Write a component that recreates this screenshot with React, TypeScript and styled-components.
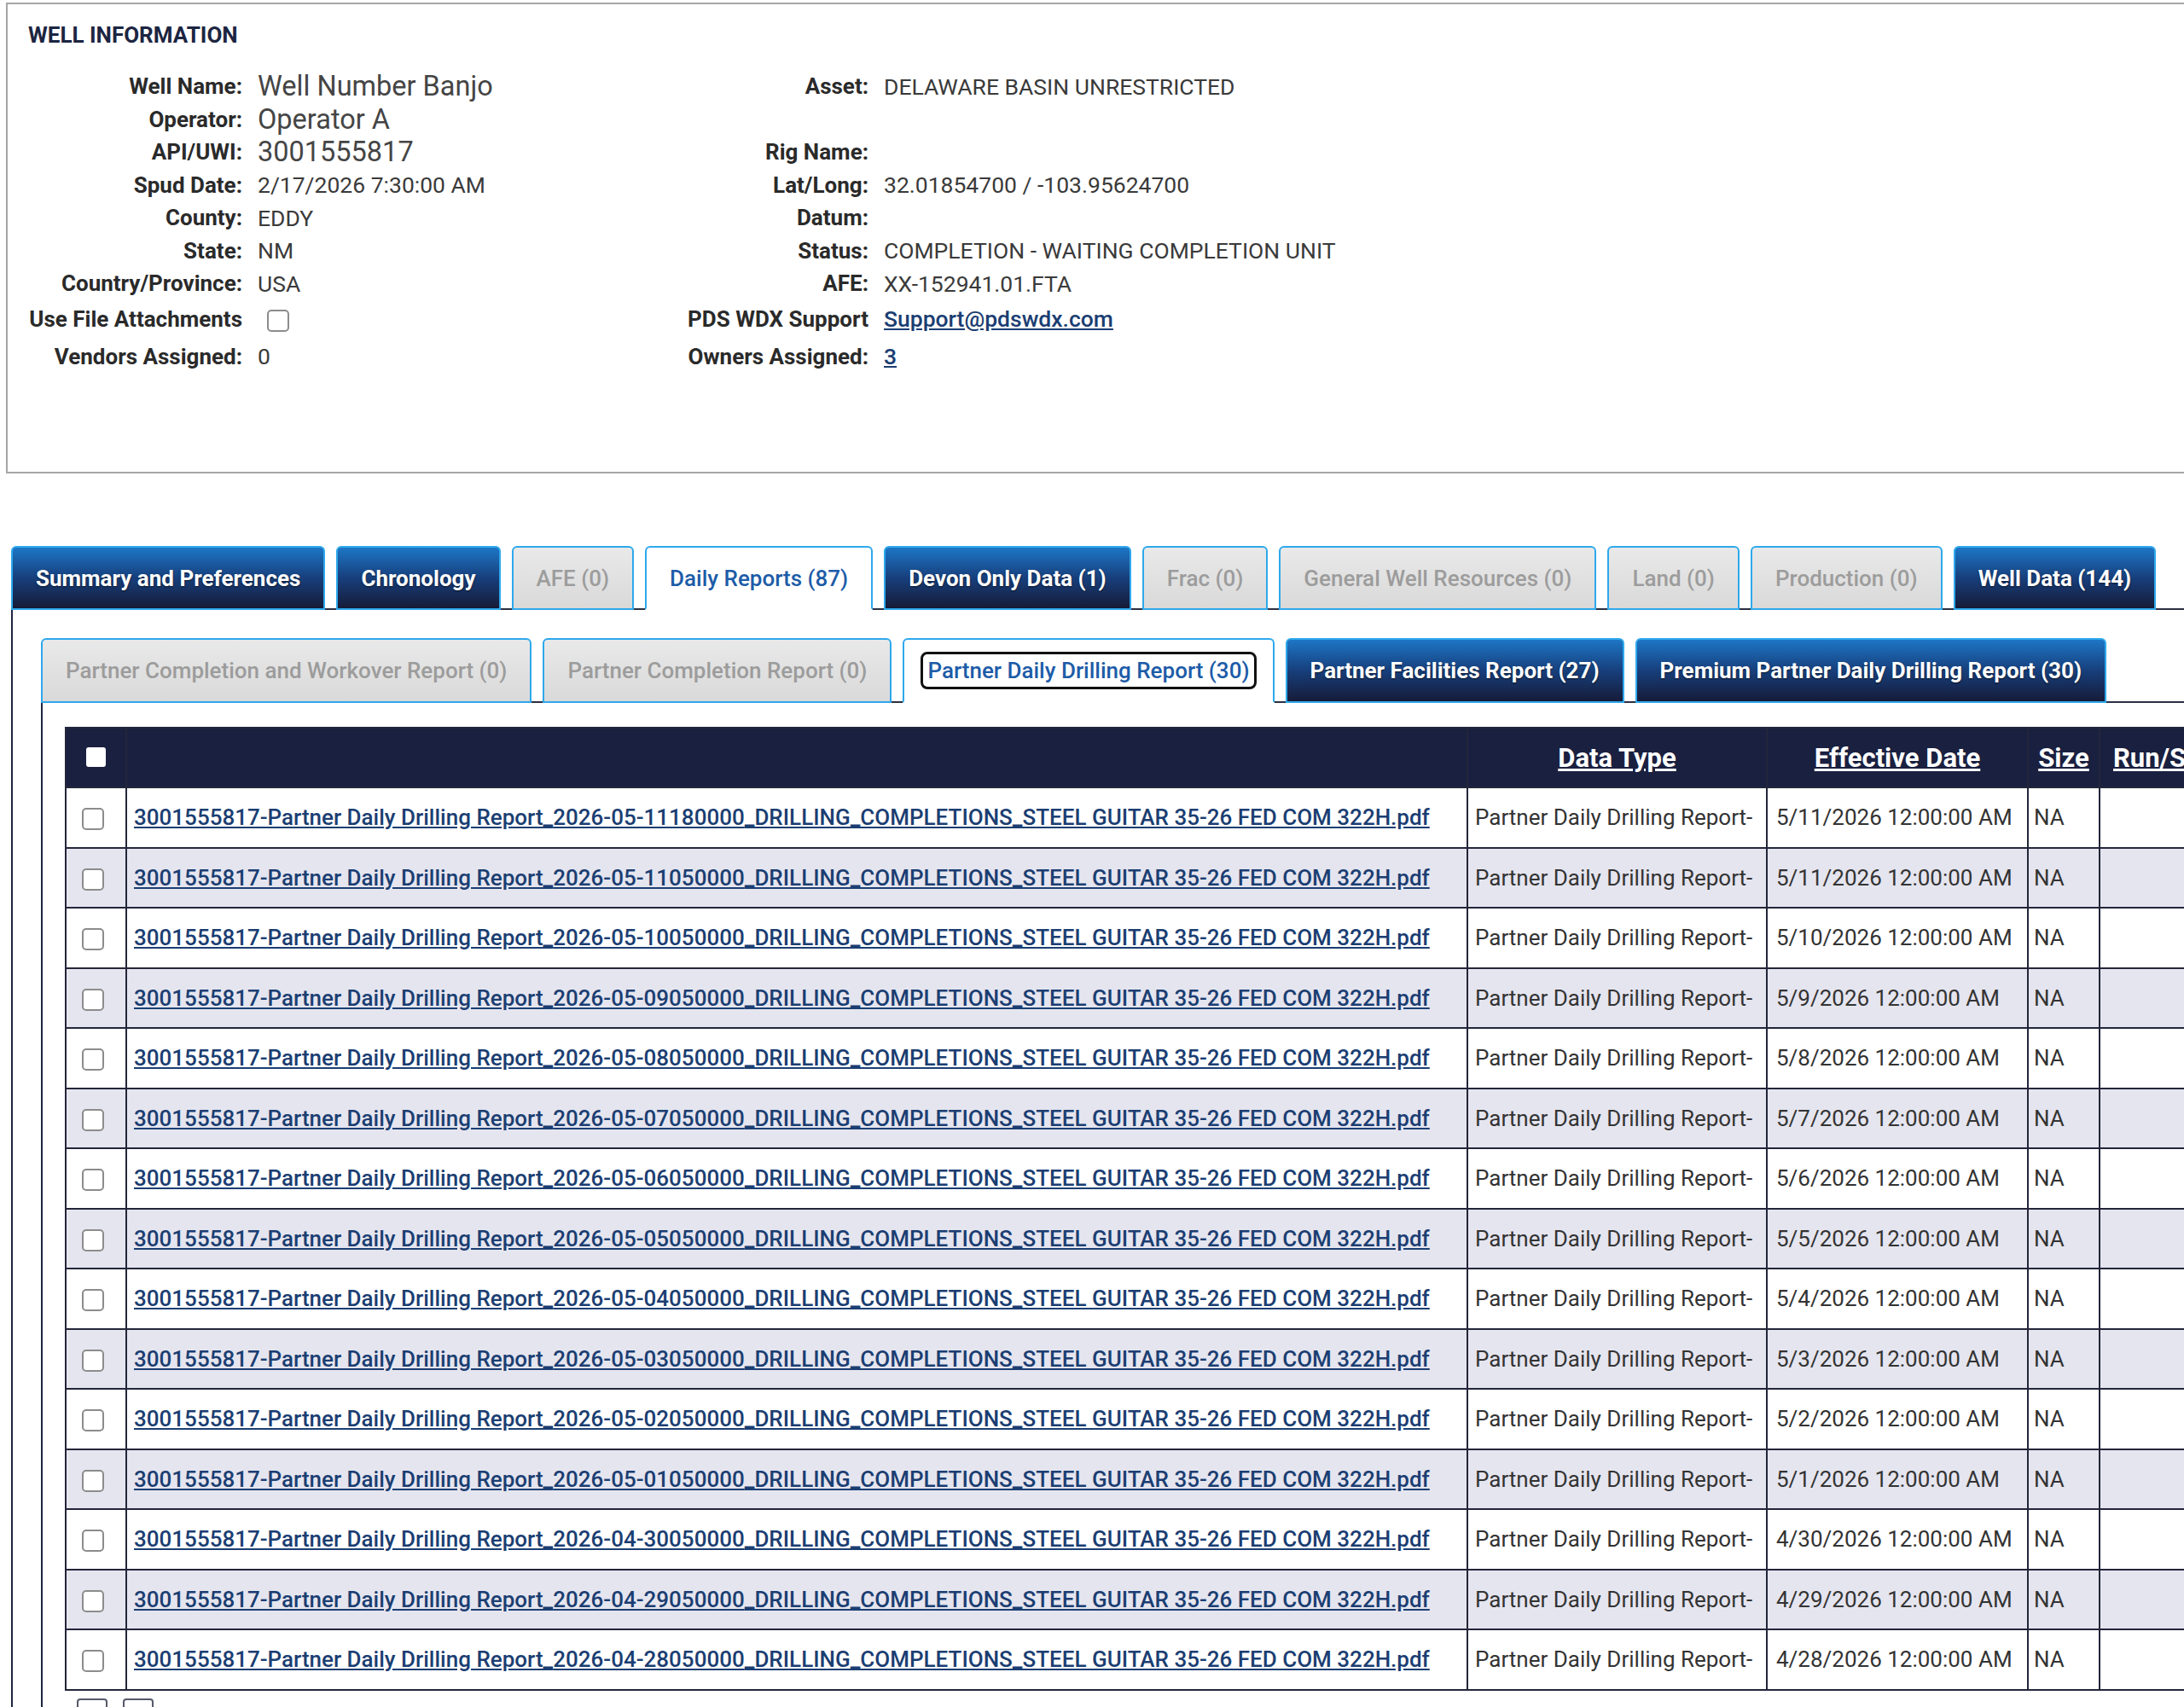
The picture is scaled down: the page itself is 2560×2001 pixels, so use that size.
import styled, { createGlobalStyle, css } from 'styled-components';

const GlobalStyle = createGlobalStyle`
  html, body {
    margin: 0;
    padding: 0;
    background: #ffffff;
    overflow: hidden;
  }
  body {
    font-family: Roboto, 'Liberation Sans', Arial, sans-serif;
    color: #333333;
  }
  * {
    box-sizing: border-box;
  }
`;

const Page = styled.div`
  width: 2700px;
  padding-top: 3px;
`;

const InfoBox = styled.section`
  margin-left: 7px;
  height: 552px;
  border: 2px solid #a6a6a6;
  padding: 21px 0 0 24px;
`;

const InfoTitle = styled.h2`
  margin: 0;
  font-size: 26px;
  line-height: 30px;
  font-weight: 700;
  color: #1c2541;
`;

const InfoGrid = styled.div`
  margin-top: 26px;
  display: grid;
  grid-template-columns: 251px 460px 238px auto;
  grid-template-rows: repeat(7, 38.5px) 44px 44px;
  column-gap: 18px;
  align-items: center;
`;

const Label = styled.div`
  text-align: right;
  font-size: 26px;
  font-weight: 700;
  color: #2a2a2a;
  white-space: nowrap;
`;

const Value = styled.div<{ $large?: boolean }>`
  font-size: ${(p) => (p.$large ? '32.5px' : '26.5px')};
  color: ${(p) => (p.$large ? '#454545' : '#3a3a3a')};
  white-space: nowrap;
`;

const InfoLink = styled.a`
  color: #1b3e72;
  text-decoration: underline;
  font-weight: 500;
`;

const Checkbox = styled.span`
  display: inline-block;
  width: 26px;
  height: 26px;
  border: 2px solid #8c8c8c;
  border-radius: 5px;
  background: #ffffff;
  vertical-align: middle;
`;

const FormCheckbox = styled(Checkbox)`
  margin-left: 11px;
`;

const TabsSection = styled.section`
  margin: 85px 0 0 13px;
`;

type TabKind = 'dark' | 'disabled' | 'active';

const TabStrip = styled.div`
  display: flex;
  align-items: flex-end;
  gap: 13px;
  border-bottom: 2px solid #2b2f42;
`;

const Tab = styled.div<{ $kind: TabKind; $height: number }>`
  height: ${(p) => p.$height}px;
  margin-bottom: -2px;
  padding: 0 27px;
  display: flex;
  align-items: center;
  border: 2px solid #2ea8ec;
  border-radius: 6px 6px 0 0;
  font-size: 26px;
  white-space: nowrap;

  ${(p) =>
    p.$kind === 'dark' &&
    css`
      background: linear-gradient(to bottom, #1d76c6 0%, #173f7c 50%, #161b38 100%);
      color: #ffffff;
      font-weight: 700;
      text-shadow: 0 1px 2px rgba(0, 0, 0, 0.6);
    `}

  ${(p) =>
    p.$kind === 'disabled' &&
    css`
      background: linear-gradient(to bottom, #e9e9e9, #d9d9d9);
      color: #9c9c9c;
      font-weight: 500;
    `}

  ${(p) =>
    p.$kind === 'active' &&
    css`
      background: #ffffff;
      border-bottom-color: #ffffff;
      color: #1d5ca8;
      font-weight: 500;
    `}
`;

const FocusRing = styled.span`
  border: 3px solid #111111;
  border-radius: 8px;
  padding: 4px 5px;
  margin: 0 -8px;
`;

const TabPanel = styled.div`
  border-left: 2px solid #1f2540;
  padding: 33px 0 0 33px;
`;

const SubPanel = styled.div`
  border-left: 2px solid #1f2540;
  padding: 28px 0 0 26px;
`;

const Table = styled.table`
  border-collapse: collapse;
  table-layout: fixed;
  border: 2px solid #23263a;
`;

const HeadCell = styled.th<{ $align?: 'left' | 'center'; $padLeft?: number }>`
  height: 70px;
  background: #1a2040;
  color: #ffffff;
  font-size: 31px;
  font-weight: 700;
  text-decoration: underline;
  text-align: ${(p) => p.$align ?? 'center'};
  border: 2px solid #23263a;
  padding: 0 0 0 ${(p) => p.$padLeft ?? 0}px;
  white-space: nowrap;
  overflow: hidden;
`;

const HeadCheck = styled.span`
  display: inline-block;
  width: 23px;
  height: 23px;
  border-radius: 3px;
  background: #ffffff;
  vertical-align: middle;
  margin-top: -6px;
`;

const Row = styled.tr<{ $alt: boolean }>`
  background: ${(p) => (p.$alt ? '#e5e5ef' : '#ffffff')};
`;

const Cell = styled.td<{ $pad?: number }>`
  height: 70.5px;
  border: 2px solid #23263a;
  padding: 0 ${(p) => p.$pad ?? 8}px;
  font-size: 26px;
  color: #333333;
  white-space: nowrap;
  overflow: hidden;
`;

const CheckCell = styled(Cell)`
  padding: 0 8px 0 0;
  text-align: center;
`;

const FileLink = styled.a`
  color: #1b3e72;
  font-weight: 500;
  text-decoration: underline;
`;

const Pager = styled.div`
  display: flex;
  gap: 18px;
  margin: 9px 0 0 14px;
`;

const PagerButton = styled.span`
  width: 36px;
  height: 30px;
  border: 2px solid #555a6a;
  border-radius: 4px;
  background: #ffffff;
`;

const mainTabs: { label: string; kind: TabKind }[] = [
  { label: 'Summary and Preferences', kind: 'dark' },
  { label: 'Chronology', kind: 'dark' },
  { label: 'AFE (0)', kind: 'disabled' },
  { label: 'Daily Reports (87)', kind: 'active' },
  { label: 'Devon Only Data (1)', kind: 'dark' },
  { label: 'Frac (0)', kind: 'disabled' },
  { label: 'General Well Resources (0)', kind: 'disabled' },
  { label: 'Land (0)', kind: 'disabled' },
  { label: 'Production (0)', kind: 'disabled' },
  { label: 'Well Data (144)', kind: 'dark' },
];

const subTabs: { label: string; kind: TabKind }[] = [
  { label: 'Partner Completion and Workover Report (0)', kind: 'disabled' },
  { label: 'Partner Completion Report (0)', kind: 'disabled' },
  { label: 'Partner Daily Drilling Report (30)', kind: 'active' },
  { label: 'Partner Facilities Report (27)', kind: 'dark' },
  { label: 'Premium Partner Daily Drilling Report (30)', kind: 'dark' },
];

const reports = [
  ['2026-05-11180000', '5/11/2026'],
  ['2026-05-11050000', '5/11/2026'],
  ['2026-05-10050000', '5/10/2026'],
  ['2026-05-09050000', '5/9/2026'],
  ['2026-05-08050000', '5/8/2026'],
  ['2026-05-07050000', '5/7/2026'],
  ['2026-05-06050000', '5/6/2026'],
  ['2026-05-05050000', '5/5/2026'],
  ['2026-05-04050000', '5/4/2026'],
  ['2026-05-03050000', '5/3/2026'],
  ['2026-05-02050000', '5/2/2026'],
  ['2026-05-01050000', '5/1/2026'],
  ['2026-04-30050000', '4/30/2026'],
  ['2026-04-29050000', '4/29/2026'],
  ['2026-04-28050000', '4/28/2026'],
];

export default function App() {
  return (
    <Page>
      <GlobalStyle />
      <InfoBox>
        <InfoTitle>WELL INFORMATION</InfoTitle>
        <InfoGrid>
          <Label>Well Name:</Label>
          <Value $large>Well Number Banjo</Value>
          <Label>Asset:</Label>
          <Value>DELAWARE BASIN UNRESTRICTED</Value>

          <Label>Operator:</Label>
          <Value $large>Operator A</Value>
          <Label />
          <Value />

          <Label>API/UWI:</Label>
          <Value $large>3001555817</Value>
          <Label>Rig Name:</Label>
          <Value />

          <Label>Spud Date:</Label>
          <Value>2/17/2026 7:30:00 AM</Value>
          <Label>Lat/Long:</Label>
          <Value>32.01854700 / -103.95624700</Value>

          <Label>County:</Label>
          <Value>EDDY</Value>
          <Label>Datum:</Label>
          <Value />

          <Label>State:</Label>
          <Value>NM</Value>
          <Label>Status:</Label>
          <Value>COMPLETION - WAITING COMPLETION UNIT</Value>

          <Label>Country/Province:</Label>
          <Value>USA</Value>
          <Label>AFE:</Label>
          <Value>XX-152941.01.FTA</Value>

          <Label>Use File Attachments</Label>
          <Value>
            <FormCheckbox />
          </Value>
          <Label>PDS WDX Support</Label>
          <Value>
            <InfoLink href="#">Support@pdswdx.com</InfoLink>
          </Value>

          <Label>Vendors Assigned:</Label>
          <Value>0</Value>
          <Label>Owners Assigned:</Label>
          <Value>
            <InfoLink href="#">3</InfoLink>
          </Value>
        </InfoGrid>
      </InfoBox>

      <TabsSection>
        <TabStrip>
          {mainTabs.map((t) => (
            <Tab key={t.label} $kind={t.kind} $height={75}>
              {t.label}
            </Tab>
          ))}
        </TabStrip>
        <TabPanel>
          <TabStrip>
            {subTabs.map((t) => (
              <Tab key={t.label} $kind={t.kind} $height={76}>
                {t.kind === 'active' ? <FocusRing>{t.label}</FocusRing> : t.label}
              </Tab>
            ))}
          </TabStrip>
          <SubPanel>
            <Table>
              <colgroup>
                <col style={{ width: 71 }} />
                <col style={{ width: 1572 }} />
                <col style={{ width: 351 }} />
                <col style={{ width: 306 }} />
                <col style={{ width: 84 }} />
                <col style={{ width: 200 }} />
              </colgroup>
              <thead>
                <tr>
                  <HeadCell>
                    <HeadCheck />
                  </HeadCell>
                  <HeadCell />
                  <HeadCell>Data Type</HeadCell>
                  <HeadCell>Effective Date</HeadCell>
                  <HeadCell>Size</HeadCell>
                  <HeadCell $align="left" $padLeft={15}>
                    Run/Suite
                  </HeadCell>
                </tr>
              </thead>
              <tbody>
                {reports.map(([stamp, date], i) => (
                  <Row key={stamp} $alt={i % 2 === 1}>
                    <CheckCell>
                      <Checkbox />
                    </CheckCell>
                    <Cell>
                      <FileLink href="#">
                        3001555817-Partner Daily Drilling Report_{stamp}
                        _DRILLING_COMPLETIONS_STEEL GUITAR 35-26 FED COM 322H.pdf
                      </FileLink>
                    </Cell>
                    <Cell>Partner Daily Drilling Report-</Cell>
                    <Cell $pad={10}>{date} 12:00:00 AM</Cell>
                    <Cell $pad={6}>NA</Cell>
                    <Cell />
                  </Row>
                ))}
              </tbody>
            </Table>
            <Pager>
              <PagerButton />
              <PagerButton />
            </Pager>
          </SubPanel>
        </TabPanel>
      </TabsSection>
    </Page>
  );
}
